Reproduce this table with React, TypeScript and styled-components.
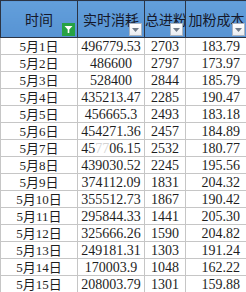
import React from "react";
import styled, { createGlobalStyle } from "styled-components";

const Global = createGlobalStyle`
  html, body { margin: 0; padding: 0; background: #ffffff; }
  body { width: 246px; height: 292px; overflow: hidden; }
`;

const Table = styled.table`
  border-collapse: collapse;
  table-layout: fixed;
  width: 247px;
  font-family: "Liberation Serif", "Noto Sans CJK SC", serif;
  color: #1e1e1e;
`;

const HeadCell = styled.th`
  position: relative;
  height: 37px;
  padding: 0;
  box-sizing: border-box;
  background: linear-gradient(#639fdb, #5793d3);
  border: 1px solid #2b3444;
  font-family: "Noto Sans CJK SC", sans-serif;
  font-weight: 400;
  font-size: 14px;
  color: #15182a;
  text-align: center;
  white-space: nowrap;
  overflow: hidden;
`;

const FilterBox = styled.span<{ $active?: boolean }>`
  position: absolute;
  right: 2px;
  bottom: 1px;
  width: 13px;
  height: 13px;
  box-sizing: border-box;
  display: flex;
  align-items: center;
  justify-content: center;
  background: ${(p) => (p.$active ? "#26a244" : "linear-gradient(#ffffff, #e9ecf0)")};
  border: 1px solid ${(p) => (p.$active ? "#26a244" : "#a9b3c0")};
`;

const Cell = styled.td<{ $align?: "center" | "right"; $date?: boolean }>`
  height: 17px;
  padding: 0 ${(p) => (p.$align === "right" ? "7px" : "0")} 0 0;
  box-sizing: border-box;
  border: 1px solid #c6c6c6;
  font-size: ${(p) => (p.$date ? "13px" : "14px")};
  line-height: 15px;
  text-align: ${(p) => p.$align ?? "center"};
  white-space: nowrap;
  overflow: hidden;
`;

const Faded = styled.span`
  color: #d4d4d4;
`;

const rows: [string, React.ReactNode, string, string][] = [
  ["5月1日", "496779.53", "2703", "183.79"],
  ["5月2日", "486600", "2797", "173.97"],
  ["5月3日", "528400", "2844", "185.79"],
  ["5月4日", "435213.47", "2285", "190.47"],
  ["5月5日", "456665.3", "2493", "183.18"],
  ["5月6日", "454271.36", "2457", "184.89"],
  ["5月7日", <>45<Faded>77</Faded>06.15</>, "2532", "180.77"],
  ["5月8日", "439030.52", "2245", "195.56"],
  ["5月9日", "374112.09", "1831", "204.32"],
  ["5月10日", "355512.73", "1867", "190.42"],
  ["5月11日", "295844.33", "1441", "205.30"],
  ["5月12日", "325666.26", "1590", "204.82"],
  ["5月13日", "249181.31", "1303", "191.24"],
  ["5月14日", "170003.9", "1048", "162.22"],
  ["5月15日", "208003.79", "1301", "159.88"],
];

const Funnel = () => (
  <svg width="9" height="9" viewBox="0 0 9 9">
    <path d="M0.5 1 H8.5 L5.3 4.6 V8 H3.7 V4.6 Z" fill="#ffffff" />
  </svg>
);

const Arrow = () => (
  <svg width="7" height="4" viewBox="0 0 7 4">
    <path d="M0 0 H7 L3.5 4 Z" fill="#6f7a88" />
  </svg>
);

export default function App() {
  return (
    <>
      <Global />
      <Table>
        <colgroup>
          <col style={{ width: 77 }} />
          <col style={{ width: 67 }} />
          <col style={{ width: 41 }} />
          <col style={{ width: 62 }} />
        </colgroup>
        <thead>
          <tr>
            <HeadCell>
              时间
              <FilterBox $active>
                <Funnel />
              </FilterBox>
            </HeadCell>
            <HeadCell>
              实时消耗
              <FilterBox>
                <Arrow />
              </FilterBox>
            </HeadCell>
            <HeadCell>
              总进粉
              <FilterBox>
                <Arrow />
              </FilterBox>
            </HeadCell>
            <HeadCell>
              加粉成本
              <FilterBox>
                <Arrow />
              </FilterBox>
            </HeadCell>
          </tr>
        </thead>
        <tbody>
          {rows.map((r, i) => (
            <tr key={i}>
              <Cell $date>{r[0]}</Cell>
              <Cell>{r[1]}</Cell>
              <Cell>{r[2]}</Cell>
              <Cell $align="right">{r[3]}</Cell>
            </tr>
          ))}
        </tbody>
      </Table>
    </>
  );
}
